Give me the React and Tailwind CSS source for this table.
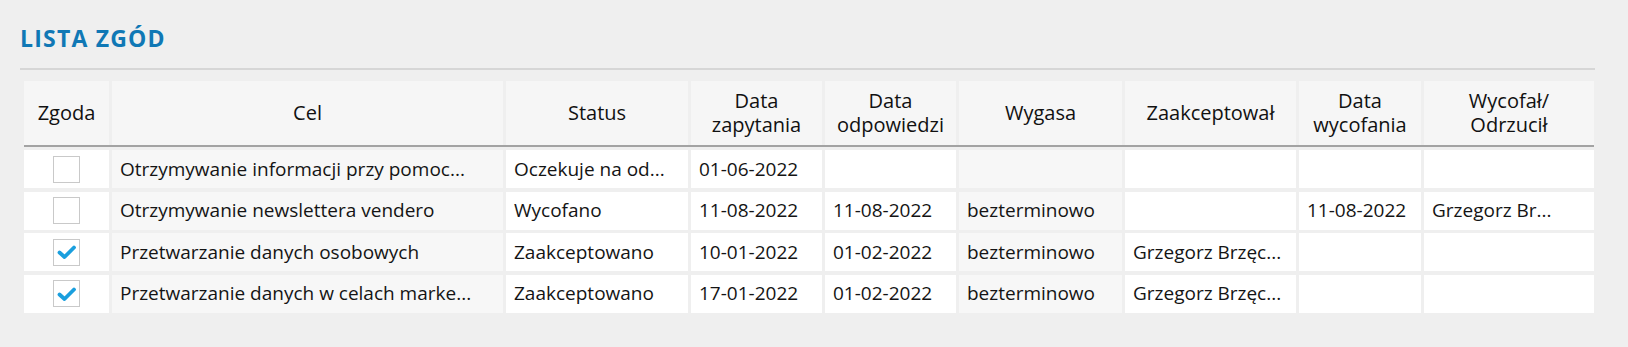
import React from 'react'

const columns = [
    { key: 'zgoda', label: ['Zgoda'] },
    { key: 'cel', label: ['Cel'], shaded: true },
    { key: 'status', label: ['Status'] },
    { key: 'dataZap', label: ['Data', 'zapytania'] },
    { key: 'dataOdp', label: ['Data', 'odpowiedzi'] },
    { key: 'wygasa', label: ['Wygasa'], shaded: true },
    { key: 'zaakc', label: ['Zaakceptował'] },
    { key: 'dataWyc', label: ['Data', 'wycofania'] },
    { key: 'wycofal', label: ['Wycofał/', 'Odrzucił'] },
]

const rows = [
    {
        id: 1, zgoda: false,
        cel: 'Otrzymywanie informacji przy pomoc...',
        status: 'Oczekuje na od...',
        dataZap: '01-06-2022', dataOdp: '', wygasa: '', zaakc: '', dataWyc: '', wycofal: '',
    },
    {
        id: 2, zgoda: false,
        cel: 'Otrzymywanie newslettera vendero',
        status: 'Wycofano',
        dataZap: '11-08-2022', dataOdp: '11-08-2022', wygasa: 'bezterminowo', zaakc: '',
        dataWyc: '11-08-2022', wycofal: 'Grzegorz Br...',
    },
    {
        id: 3, zgoda: true,
        cel: 'Przetwarzanie danych osobowych',
        status: 'Zaakceptowano',
        dataZap: '10-01-2022', dataOdp: '01-02-2022', wygasa: 'bezterminowo',
        zaakc: 'Grzegorz Brzęc...', dataWyc: '', wycofal: '',
    },
    {
        id: 4, zgoda: true,
        cel: 'Przetwarzanie danych w celach marke...',
        status: 'Zaakceptowano',
        dataZap: '17-01-2022', dataOdp: '01-02-2022', wygasa: 'bezterminowo',
        zaakc: 'Grzegorz Brzęc...', dataWyc: '', wycofal: '',
    },
]

function Checkbox({ checked }) {
    return (
        <div className="w-[27px] h-[27px] border-[1.5px] border-[#c9c9c9] bg-white flex items-center justify-center">
            {checked && (
                <svg width="20" height="16" viewBox="0 0 20 16">
                    <path
                        d="M2.5 8.5 L7.5 13 L17 3.5"
                        fill="none"
                        stroke="#1a9fde"
                        strokeWidth="3.8"
                        strokeLinecap="round"
                        strokeLinejoin="round"
                    />
                </svg>
            )}
        </div>
    )
}

function App() {
    return (
        <div
            className="w-full h-screen bg-[#efefef] pl-[20px] pr-[33px] pt-[24px] text-[#141414]"
            style={{ fontFamily: '"Open Sans", "Noto Sans", sans-serif' }}
        >
            {/* Title */}
            <h2 className="text-[23px] font-bold leading-[28px] text-[#1078b5] tracking-[1.2px]">
                LISTA ZGÓD
            </h2>
            <div className="mt-[16px] h-[2px] bg-[#d6d6d6]" />

            {/* Table */}
            <div className="ml-[4px] mt-[11px] grid grid-cols-[85px_391px_182px_131px_131px_163px_171px_122px_170px] gap-x-[3px] text-[19px] font-medium">
                {columns.map((col) => (
                    <div
                        key={col.key}
                        className="h-[64px] bg-[#f6f6f6] flex items-center justify-center text-center text-[20px] leading-[24px] text-[#111]"
                    >
                        <span>
                            {col.label[0]}
                            {col.label[1] && <br />}
                            {col.label[1]}
                        </span>
                    </div>
                ))}
                <div className="col-span-9 h-[2px] bg-[#a3a3a3] mb-[3px]" />

                {rows.map((row) => (
                    <React.Fragment key={row.id}>
                        {columns.map((col) => (
                            <div
                                key={col.key}
                                className={`h-[38px] mb-[3.5px] flex items-center px-2 whitespace-nowrap overflow-hidden ${col.shaded ? 'bg-[#f7f7f7]' : 'bg-white'} ${col.key === 'zgoda' ? 'justify-center' : ''}`}
                            >
                                {col.key === 'zgoda' ? <Checkbox checked={row.zgoda} /> : row[col.key]}
                            </div>
                        ))}
                    </React.Fragment>
                ))}
            </div>
        </div>
    )
}

export default App
